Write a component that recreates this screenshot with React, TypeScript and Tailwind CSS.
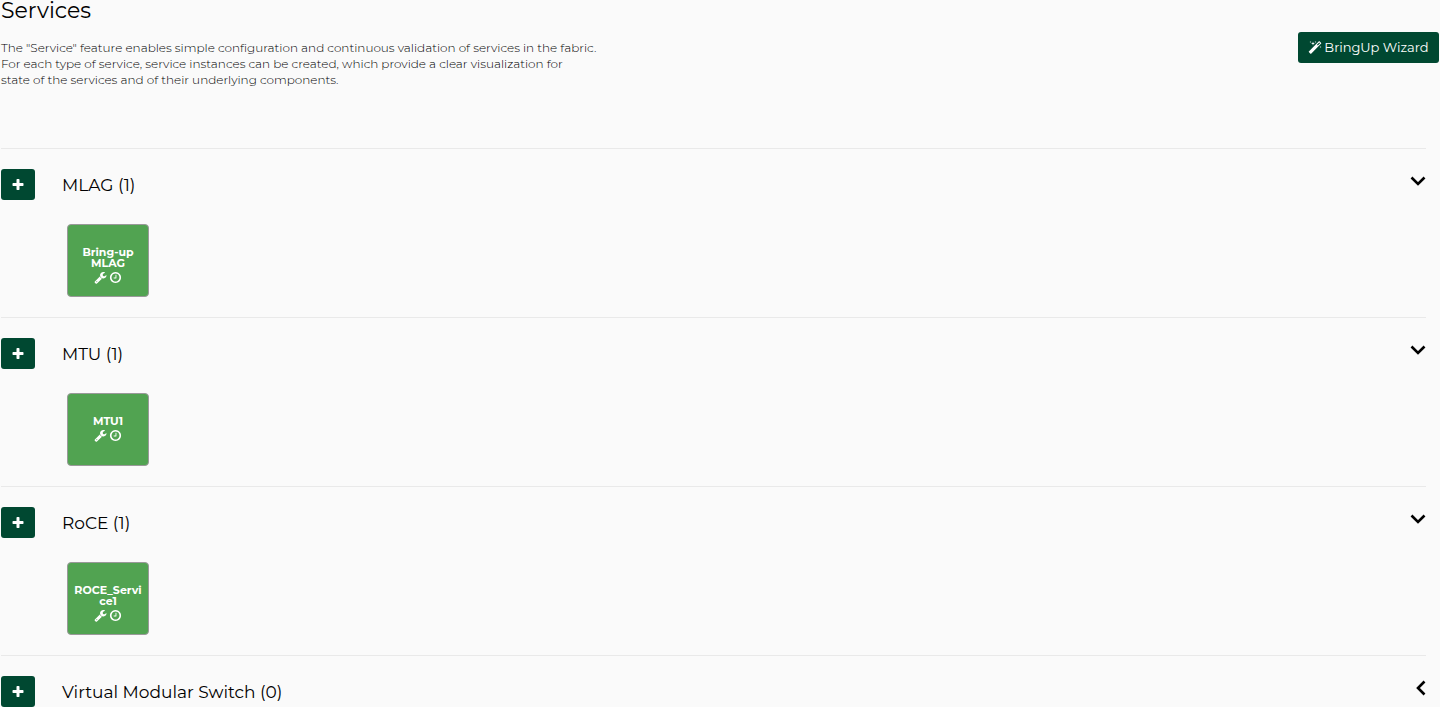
import { useState } from "react";

type IconProps = { d: string; className?: string };

function Icon({ d, className }: IconProps) {
  return (
    <svg aria-hidden viewBox="0 0 1792 1792" fill="currentColor" className={className}>
      <path d={d} />
    </svg>
  );
}

const PLUS =
  "M1600 736v192q0 40-28 68t-68 28h-416v416q0 40-28 68t-68 28h-192q-40 0-68-28t-28-68v-416h-416q-40 0-68-28t-28-68v-192q0-40 28-68t68-28h416v-416q0-40 28-68t68-28h192q40 0 68 28t28 68v416h416q40 0 68 28t28 68z";
const CLOCK =
  "M1024 544v448q0 14-9 23t-23 9h-320q-14 0-23-9t-9-23v-64q0-14 9-23t23-9h224v-352q0-14 9-23t23-9h64q14 0 23 9t9 23zm416 352q0-148-73-273t-198-198-273-73-273 73-198 198-73 273 73 273 198 198 273 73 273-73 198-198 73-273zm224 0q0 209-103 385.5t-279.5 279.5-385.5 103-385.5-103-279.5-279.5-103-385.5 103-385.5 279.5-279.5 385.5-103 385.5 103 279.5 279.5 103 385.5z";
const WRENCH =
  "M448 1472q0-26-19-45t-45-19-45 19-19 45 19 45 45 19 45-19 19-45zm644-420l-682 682q-37 37-90 37-52 0-91-37l-106-108q-38-36-38-90 0-53 38-91l681-681q39 98 114.5 173.5t173.5 114.5zm634-435q0 39-23 106-47 134-164.5 217.5t-258.5 83.5q-185 0-316.5-131.5t-131.5-316.5 131.5-316.5 316.5-131.5q58 0 121.5 16.5t107.5 46.5q16 11 16 28t-16 28l-293 169v224l193 107q5-3 79-48.5t135.5-81 70.5-35.5q15 0 23.5 10t8.5 25z";
const MAGIC =
  "M1254 581l293-293-107-107-293 293zm447-293q0 27-18 45l-1286 1286q-18 18-45 18t-45-18l-198-198q-18-18-18-45t18-45l1286-1286q18-18 45-18t45 18l198 198q18 18 18 45zm-1351-190l98 30-98 30-30 98-30-98-98-30 98-30 30-98zm350 162l196 60-196 60-60 196-60-196-196-60 196-60 60-196zm930 478l98 30-98 30-30 98-30-98-98-30 98-30 30-98zm-640-640l98 30-98 30-30 98-30-98-98-30 98-30 30-98z";

function Chevron({ open }: { open: boolean }) {
  return open ? (
    <svg aria-hidden viewBox="0 0 16 10" className="h-[10px] w-4" fill="none" stroke="currentColor" strokeWidth="2.600">
      <path d="M1.500 1.500 8 8l6.500-6.500" />
    </svg>
  ) : (
    <svg aria-hidden viewBox="0 0 10 16" className="h-4 w-[10px]" fill="none" stroke="currentColor" strokeWidth="2.600">
      <path d="M8.500 1.500 2 8l6.500 6.500" />
    </svg>
  );
}

type Service = { name: string; instances: string[] };

const services: Service[] = [
  { name: "MLAG", instances: ["Bring-up MLAG"] },
  { name: "MTU", instances: ["MTU1"] },
  { name: "RoCE", instances: ["ROCE_Service1"] },
  { name: "Virtual Modular Switch", instances: [] },
];

function ServiceSection({ name, instances }: Service) {
  const [open, setOpen] = useState(instances.length > 0);

  return (
    <section className="border-t border-[#e9e9e9] pt-5 pb-5 last:pb-0">
      <div className="flex items-start">
        <button
          aria-label={`Add ${name} service`}
          className="flex h-[31px] w-[34px] shrink-0 items-center justify-center rounded-[3px] bg-[#004831] text-white"
        >
          <Icon d={PLUS} className="size-[14px]" />
        </button>
        <h2 className="ml-[27px] flex-1 pt-1 text-[17px] leading-6">
          {name} ({instances.length})
        </h2>
        <button aria-label={`Toggle ${name}`} aria-expanded={open} onClick={() => setOpen(!open)} className="flex h-6 items-center">
          <Chevron open={open} />
        </button>
      </div>

      {open && (
        <div className="mt-6 ml-[66px] flex gap-2">
          {instances.map((instance) => (
            <button
              key={instance}
              className="flex h-[73px] w-[82px] flex-col items-center rounded-[4px] border border-[#999] bg-[#51a351] px-1 pt-[22px] text-white"
            >
              <span className="w-full text-center text-[11px] leading-[11px] font-bold">
                {instance.split(" ").map((word) => (
                  <span key={word} className="block break-all">
                    {word}
                  </span>
                ))}
              </span>
              <span className="mt-[2px] flex gap-[2px]">
                <Icon d={WRENCH} className="size-[13px]" />
                <Icon d={CLOCK} className="size-[13px]" />
              </span>
            </button>
          ))}
        </div>
      )}
    </section>
  );
}

export default function App() {
  return (
    <main className="min-h-screen bg-[#fafafa] pl-px font-[Montserrat,Inter,sans-serif] text-black">
      {/* Page header */}
      <header className="flex h-[148px] items-start justify-between pr-px">
        <div>
          <h1 className="text-[22px] leading-[22px]">Services</h1>
          <p className="mt-[18px] text-[12px] leading-[16px] font-light whitespace-nowrap text-black">
            The "Service" feature enables simple configuration and continuous validation of services in the fabric.
            <br />
            For each type of service, service instances can be created, which provide a clear visualization for
            <br />
            state of the services and of their underlying components.
          </p>
        </div>
        <button className="mt-8 flex h-[31px] w-[141px] items-center justify-center gap-[2px] rounded-[3px] bg-[#004831] text-[13px] whitespace-nowrap text-white">
          <Icon d={MAGIC} className="size-[14px]" />
          BringUp Wizard
        </button>
      </header>

      <div className="pr-[14px]">
        {services.map((service) => (
          <ServiceSection key={service.name} {...service} />
        ))}
      </div>
    </main>
  );
}
